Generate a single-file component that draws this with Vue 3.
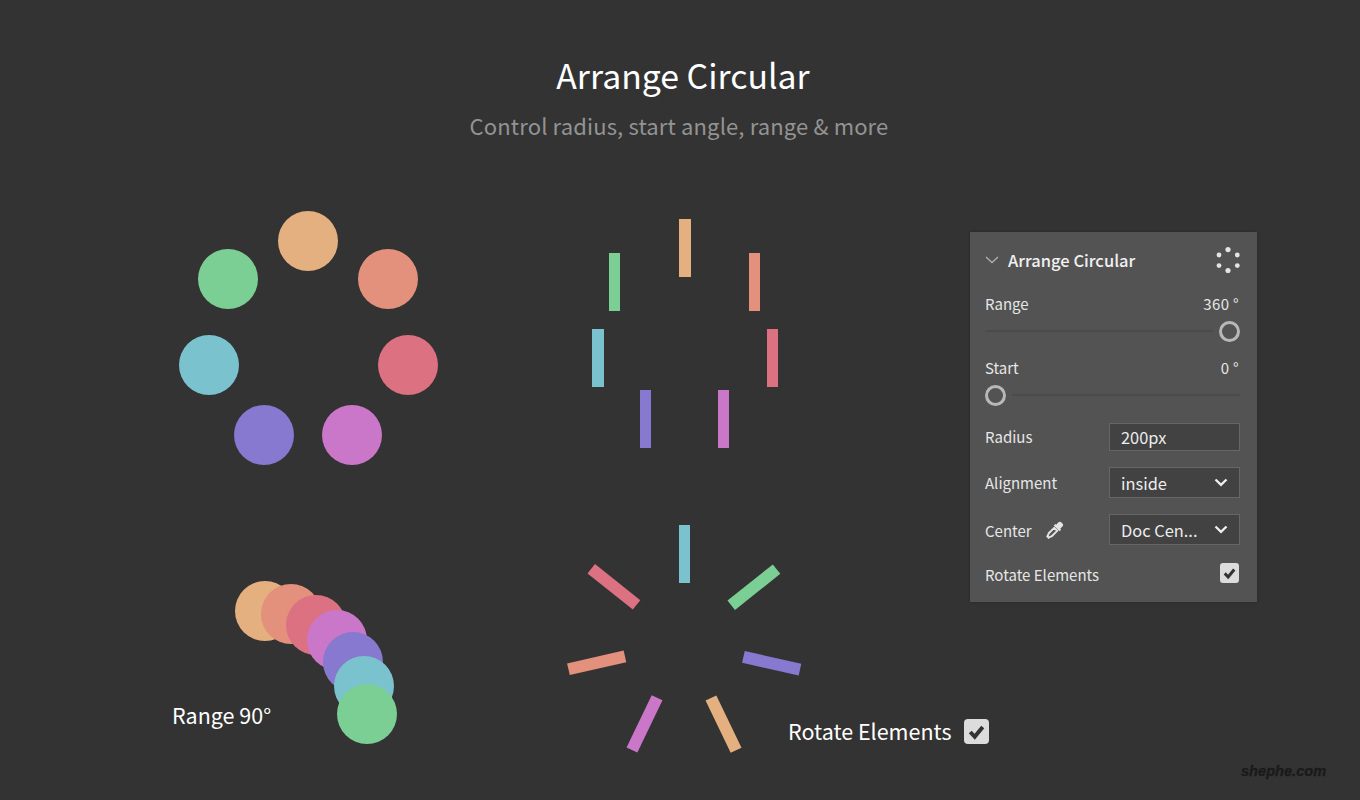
<script setup>
const colors = { orange: '#e4b07f', salmon: '#e3907d', rose: '#dc7181', magenta: '#cb77c9', purple: '#8679cf', cyan: '#7bc2cf', green: '#7bcf95' }

const ringCircles = [
  ['orange', 308, 241], ['salmon', 388, 279], ['rose', 408, 365], ['magenta', 352, 435],
  ['purple', 264, 435], ['cyan', 209, 365], ['green', 228, 279]
]
const rangeCircles = [
  ['orange', 265, 611], ['salmon', 291, 614], ['rose', 316, 625], ['magenta', 337, 640],
  ['purple', 353, 662], ['cyan', 364, 686], ['green', 367, 714]
]
const ringBars = [
  ['orange', 685.2, 248, 0], ['salmon', 754.7, 282, 0], ['rose', 772.3, 358, 0], ['magenta', 723.6, 419, 0],
  ['purple', 645.5, 419, 0], ['cyan', 597.8, 358, 0], ['green', 614.3, 282, 0]
]
const rotatedBars = [
  ['cyan', 684.4, 553.5, 0], ['green', 754, 587, 51.4], ['purple', 771.7, 662.7, 102.8],
  ['orange', 723.3, 724, 154.3], ['magenta', 645, 724, 205.7], ['salmon', 596.7, 662.7, 257.1],
  ['rose', 614, 587, 308.6]
]
const circleStyle = ([c, x, y]) => ({ left: x - 30 + 'px', top: y - 30 + 'px', background: colors[c] })
const barStyle = ([c, x, y, r]) => ({ left: x - 5.75 + 'px', top: y - 29 + 'px', background: colors[c], transform: `rotate(${r}deg)` })
</script>

<template>
  <div class="page">
    <header class="head">
      <h1 class="title">Arrange Circular</h1>
      <p class="sub">Control radius, start angle, range &amp; more</p>
    </header>

    <div class="canvas">
      <span v-for="(c, i) in ringCircles" :key="'a' + i" class="dot" :style="circleStyle(c)"></span>
      <span v-for="(c, i) in rangeCircles" :key="'b' + i" class="dot" :style="circleStyle(c)"></span>
      <span v-for="(b, i) in ringBars" :key="'c' + i" class="bar" :style="barStyle(b)"></span>
      <span v-for="(b, i) in rotatedBars" :key="'d' + i" class="bar" :style="barStyle(b)"></span>
      <span class="note note-range">Range 90°</span>
      <div class="note note-rotate">
        <span>Rotate Elements</span>
        <span class="check big">
          <svg viewBox="0 0 24 24" width="25" height="25"><path d="M6 12.5l4.3 4.6L18 7.6" fill="none" stroke="#333" stroke-width="3.8" /></svg>
        </span>
      </div>
    </div>

    <aside class="panel">
      <div class="ph">
        <svg class="chev" viewBox="0 0 14 8" width="14" height="8"><path d="M1 1l6 5.5L13 1" fill="none" stroke="#adadad" stroke-width="1.4" /></svg>
        <span class="ph-title">Arrange Circular</span>
        <svg class="spin" viewBox="0 0 26 26" width="26" height="26">
          <g fill="#e4e4e4">
            <circle cx="13" cy="2.6" r="2.6" /><circle cx="22.3" cy="8" r="2.4" /><circle cx="22.3" cy="18.6" r="2.4" />
            <circle cx="13" cy="23.6" r="2.6" /><circle cx="4" cy="18.6" r="2.4" /><circle cx="4" cy="8" r="2.4" />
          </g>
        </svg>
      </div>

      <div class="lab mt19"><span>Range</span><span class="val">360 °</span></div>
      <div class="slider mt6"><i class="track"></i><b class="thumb"></b></div>

      <div class="lab mt16"><span>Start</span><span class="val">0 °</span></div>
      <div class="slider mt6"><b class="thumb"></b><i class="track"></i></div>

      <div class="row mt17">
        <span class="radius-l">Radius</span>
        <div class="field radius">200px</div>
      </div>
      <div class="row mt16">
        <span>Alignment</span>
        <div class="field sel">inside
          <svg viewBox="0 0 14 9" width="14" height="9"><path d="M1.5 1.5L7 6.8l5.5-5.3" fill="none" stroke="#eee" stroke-width="2.3" /></svg>
        </div>
      </div>
      <div class="row mt16">
        <span class="center-l"><span class="center-t">Center</span>
          <svg viewBox="0 0 18 18" width="18" height="18">
            <path d="M12.2 1.4a2.3 2.3 0 0 1 3.2 0l1 1a2.3 2.3 0 0 1 0 3.2l-2.2 2.2.9.9-1.6 1.6-5.8-5.8 1.6-1.6.9.9z" fill="#e4e4e4" />
            <path d="M8.2 6.8L3 12c-.8.8-.5 1.4-.9 2.1l-.8 1.3 1.3 1.3 1.3-.8c.7-.4 1.3-.1 2.1-.9l5.2-5.2z" fill="none" stroke="#e4e4e4" stroke-width="1.9" />
          </svg>
        </span>
        <div class="field sel">Doc Cen...
          <svg viewBox="0 0 14 9" width="14" height="9"><path d="M1.5 1.5L7 6.8l5.5-5.3" fill="none" stroke="#eee" stroke-width="2.3" /></svg>
        </div>
      </div>
      <div class="row mt18 rot">
        <span class="rot-l">Rotate Elements</span>
        <span class="check small">
          <svg viewBox="0 0 24 24" width="20" height="20"><path d="M6 12.5l4.3 4.6L18 7.6" fill="none" stroke="#333" stroke-width="3.8" /></svg>
        </span>
      </div>
    </aside>

    <span class="mark">shephe.com</span>
  </div>
</template>

<style>
html, body { margin: 0; background: #333; }
</style>

<style scoped>
.page {
  position: relative;
  width: 1360px;
  height: 800px;
  background: #333333;
  overflow: hidden;
  font-family: "Noto Sans CJK SC", "Noto Sans", sans-serif;
  box-sizing: border-box;
  padding-top: 53px;
}
.head { text-align: center; padding-left: 6px; }
.title { margin: 0; font-size: 33.8px; line-height: 44px; font-weight: 400; color: #fff; }
.sub { margin: 13px 8px 0 0; font-size: 22px; line-height: 30px; color: #939393; letter-spacing: 0.14px; }
.canvas { position: absolute; inset: 0; }
.dot { position: absolute; width: 60px; height: 60px; border-radius: 50%; }
.bar { position: absolute; width: 11.5px; height: 58px; }
.note { position: absolute; color: #fff; font-size: 21.5px; line-height: 30px; white-space: nowrap; }
.note-range { left: 172px; top: 700px; }
.note-rotate { left: 788px; top: 716px; display: flex; align-items: center; gap: 12.5px; }
.check { width: 19px; height: 20px; background: #dcdcdc; border-radius: 3px; display: flex; align-items: center; justify-content: center; }
.check.big { width: 25px; height: 25px; border-radius: 4px; }
.check.small { margin-right: 1px; }

.panel {
  position: relative;
  margin: 92px 0 0 970px;
  width: 287px;
  height: 370px;
  box-sizing: border-box;
  padding: 15px 17px 0 15px;
  background: #535353;
  color: #e6e6e6;
  font-size: 15px;
  box-shadow: 0 0 3px rgba(0, 0, 0, .25);
}
.ph { display: flex; align-items: center; height: 28px; }
.chev { margin-right: 9px; margin-top: -3px; }
.ph-title { font-size: 16.5px; font-weight: 500; color: #f0f0f0; margin-top: -2px; }
.spin { margin-left: auto; margin-right: -1px; margin-top: -2px; }
.lab { display: flex; justify-content: space-between; height: 20px; line-height: 20px; padding-right: 1px; }
.val { letter-spacing: 0.35px; }
.slider { position: relative; display: flex; align-items: center; gap: 6px; height: 22px; }
.track { flex: 1; height: 2px; background: #4b4b4b; }
.thumb { width: 21px; height: 21px; box-sizing: border-box; border: 3px solid #b8b8b8; border-radius: 50%; flex: none; }
.row { display: flex; align-items: center; justify-content: space-between; }
.field {
  width: 131px;
  box-sizing: border-box;
  height: 31px;
  background: #424242;
  border: 1px solid #666;
  padding: 0 11px;
  display: flex;
  align-items: center;
  justify-content: space-between;
  font-size: 16.4px;
  color: #ececec;
}
.field.radius { height: 28px; }
.radius-l { margin-top: -2px; }
.center-l { display: flex; align-items: center; gap: 14px; }
.center-t { margin-top: 2px; }
.rot { height: 20px; }
.rot-l { margin-top: 2px; }
.mt6 { margin-top: 6px; }
.mt16 { margin-top: 16px; }
.mt17 { margin-top: 17px; }
.mt18 { margin-top: 18px; }
.mt19 { margin-top: 19px; }
.mark {
  position: absolute;
  left: 1241px;
  top: 763px;
  font-family: "Liberation Sans", sans-serif;
  font-size: 14.6px;
  font-weight: 700;
  font-style: italic;
  color: #1a1a1a;
  -webkit-text-stroke: 0.3px #1a1a1a;
}
</style>
